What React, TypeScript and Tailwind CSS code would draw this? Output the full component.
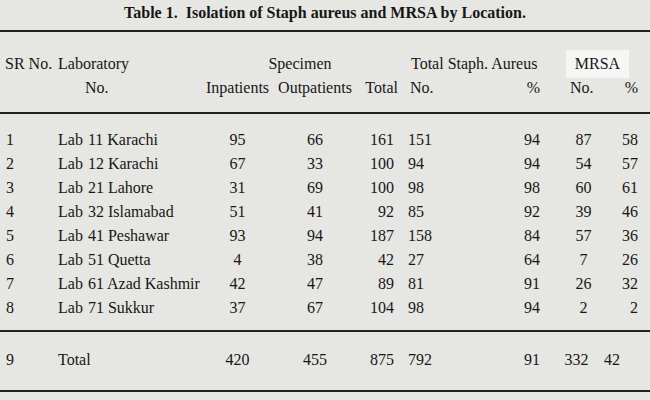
const rows = [
  { sr: '1', lab: '11', city: 'Karachi', inp: '95', out: '66', total: '161', no: '151', pct: '94', mNo: '87', mPct: '58' },
  { sr: '2', lab: '12', city: 'Karachi', inp: '67', out: '33', total: '100', no: '94', pct: '94', mNo: '54', mPct: '57' },
  { sr: '3', lab: '21', city: 'Lahore', inp: '31', out: '69', total: '100', no: '98', pct: '98', mNo: '60', mPct: '61' },
  { sr: '4', lab: '32', city: 'Islamabad', inp: '51', out: '41', total: '92', no: '85', pct: '92', mNo: '39', mPct: '46' },
  { sr: '5', lab: '41', city: 'Peshawar', inp: '93', out: '94', total: '187', no: '158', pct: '84', mNo: '57', mPct: '36' },
  { sr: '6', lab: '51', city: 'Quetta', inp: '4', out: '38', total: '42', no: '27', pct: '64', mNo: '7', mPct: '26' },
  { sr: '7', lab: '61', city: 'Azad Kashmir', inp: '42', out: '47', total: '89', no: '81', pct: '91', mNo: '26', mPct: '32' },
  { sr: '8', lab: '71', city: 'Sukkur', inp: '37', out: '67', total: '104', no: '98', pct: '94', mNo: '2', mPct: '2' },
];

const grid = 'grid grid-cols-[55px_145px_75px_80px_45px_60px_85px_55px_50px] items-center';

function Rule() {
  return <div className="h-[2px] bg-[#222]" />;
}

export default function App() {
  return (
    <div className="h-[400px] w-[650px] overflow-hidden bg-[#e6e6e3] font-['Liberation_Serif'] text-[16px] leading-none text-[#161616]">
      <div className="flex h-[30px] justify-center pt-[5px]">
        <h1 className="whitespace-pre text-[16px] font-bold">Table 1.  Isolation of Staph aureus and MRSA by Location.</h1>
      </div>
      <Rule />

      {/* header */}
      <div className="h-[80px] pt-[18px]">
        <div className={`${grid} h-[25px]`}>
          <div className="whitespace-nowrap pl-[5px]">SR No.</div>
          <div className="pl-[3px]">Laboratory</div>
          <div className="col-span-3 text-center">Specimen</div>
          <div className="col-span-2 pl-[11px]">Total Staph. Aureus</div>
          <div className="col-span-2 flex justify-center">
            <span className="bg-[#f6f6f4] px-[9px] py-[6px]">MRSA</span>
          </div>
        </div>
        <div className={`${grid} h-[25px]`}>
          <div />
          <div className="pl-[30px]">No.</div>
          <div className="text-center">Inpatients</div>
          <div className="text-center">Outpatients</div>
          <div className="pr-[2px] text-right">Total</div>
          <div className="pl-[10px]">No.</div>
          <div className="pr-[5px] text-right">%</div>
          <div className="pl-[25px]">No.</div>
          <div className="pr-[12px] text-right">%</div>
        </div>
      </div>
      <Rule />

      {/* body */}
      <div className="pt-[14px] pb-[10px]">
        {rows.map(r => (
          <div key={r.sr} className={`${grid} h-[24px]`}>
            <div className="pl-[6px]">{r.sr}</div>
            <div className="whitespace-nowrap pl-[3px]">
              Lab<span className="ml-[5px]">{r.lab}</span> {r.city}
            </div>
            <div className="text-center">{r.inp}</div>
            <div className="text-center">{r.out}</div>
            <div className="pr-[6px] text-right">{r.total}</div>
            <div className="pl-[8px]">{r.no}</div>
            <div className="pr-[5px] text-right">{r.pct}</div>
            <div className="pl-[22px] text-center">{r.mNo}</div>
            <div className="pr-[12px] text-right">{r.mPct}</div>
          </div>
        ))}
      </div>
      <Rule />

      {/* total */}
      <div className="h-[58px] pt-[16px]">
        <div className={`${grid} h-[24px]`}>
          <div className="pl-[6px]">9</div>
          <div className="pl-[3px]">Total</div>
          <div className="text-center">420</div>
          <div className="text-center">455</div>
          <div className="pr-[6px] text-right">875</div>
          <div className="pl-[8px]">792</div>
          <div className="pr-[5px] text-right">91</div>
          <div className="pl-[8px] text-center">332</div>
          <div className="pr-[30px] text-right">42</div>
        </div>
      </div>
      <Rule />
    </div>
  );
}
